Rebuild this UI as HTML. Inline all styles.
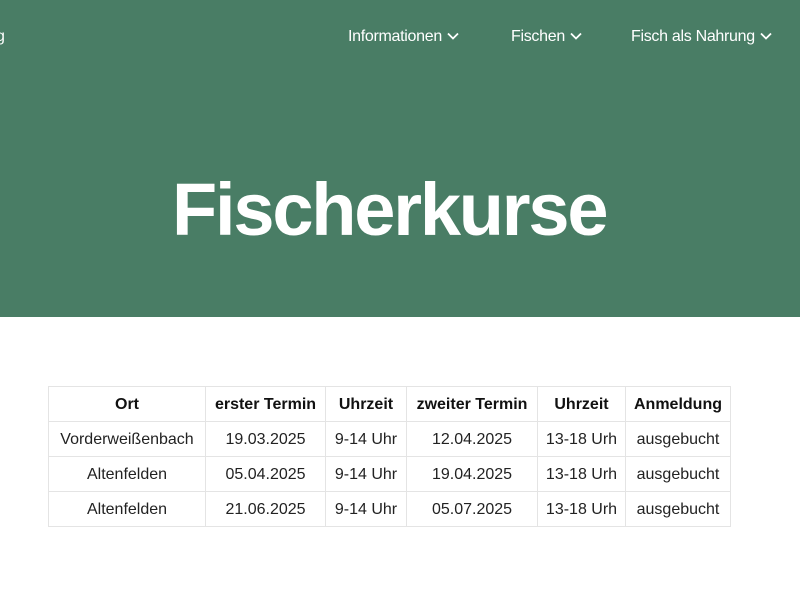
<!DOCTYPE html>
<html><head><meta charset="utf-8"><style>
*{margin:0;padding:0;box-sizing:border-box}
body{width:800px;height:600px;overflow:hidden;background:#fff;font-family:"Liberation Sans",sans-serif}
.hero{position:absolute;left:0;top:0;width:800px;height:317px;background:#497d65}
.nav{position:absolute;top:28px;color:#fff;font-size:16px;letter-spacing:-0.3px;white-space:nowrap}
.nav svg{vertical-align:middle;margin-left:5px;margin-top:-2px}
h1{position:absolute;left:172px;top:170px;font-size:74px;font-weight:bold;color:#fff;letter-spacing:-2.2px;line-height:80px;white-space:nowrap}
table{position:absolute;left:48px;top:386px;border-collapse:collapse;font-size:16px;color:#222}
td,th{border:1px solid #e4e4e4;text-align:center;height:35px;padding:2px 0 0;white-space:nowrap}
th{font-weight:bold;color:#111}
</style></head><body>
<div class="hero">
<div style="position:absolute;left:-4px;top:28px;color:#fff;font-size:16px">g</div>
<div class="nav" style="left:348px">Informationen<svg width="12" height="8" viewBox="0 0 12 8"><path d="M1 1.5l5 5 5-5" stroke="#fff" stroke-width="1.8" fill="none"/></svg></div>
<div class="nav" style="left:511px">Fischen<svg width="12" height="8" viewBox="0 0 12 8"><path d="M1 1.5l5 5 5-5" stroke="#fff" stroke-width="1.8" fill="none"/></svg></div>
<div class="nav" style="left:631px">Fisch als Nahrung<svg width="12" height="8" viewBox="0 0 12 8"><path d="M1 1.5l5 5 5-5" stroke="#fff" stroke-width="1.8" fill="none"/></svg></div>
<h1>Fischerkurse</h1>
</div>
<table>
<tr><th style="width:157px">Ort</th><th style="width:120px">erster Termin</th><th style="width:81px">Uhrzeit</th><th style="width:131px">zweiter Termin</th><th style="width:88px">Uhrzeit</th><th style="width:105px">Anmeldung</th></tr>
<tr><td>Vorderweißenbach</td><td>19.03.2025</td><td>9-14 Uhr</td><td>12.04.2025</td><td>13-18 Urh</td><td>ausgebucht</td></tr>
<tr><td>Altenfelden</td><td>05.04.2025</td><td>9-14 Uhr</td><td>19.04.2025</td><td>13-18 Urh</td><td>ausgebucht</td></tr>
<tr><td>Altenfelden</td><td>21.06.2025</td><td>9-14 Uhr</td><td>05.07.2025</td><td>13-18 Urh</td><td>ausgebucht</td></tr>
</table>
</body></html>
